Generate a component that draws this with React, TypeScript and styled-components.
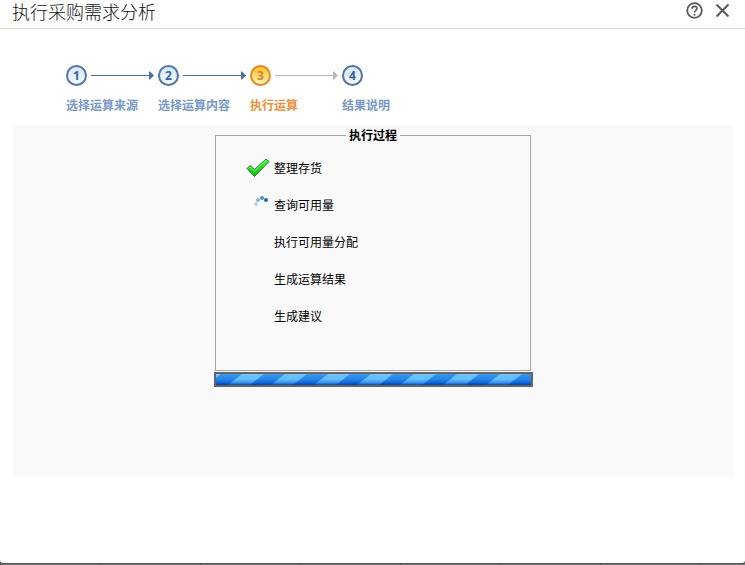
import React from "react";
import styled, { createGlobalStyle } from "styled-components";

const GlobalStyle = createGlobalStyle`
  * { box-sizing: border-box; }
  body {
    margin: 0;
    background: #6e6a6b;
    font-family: "Noto Sans CJK SC", sans-serif;
    font-size: 12px;
    line-height: 16px;
    color: #000;
  }
`;

const Page = styled.div`
  display: flex;
  flex-direction: column;
  min-height: 100vh;
  padding-bottom: 2px;
  background: repeating-linear-gradient(90deg, #4c494a 0 1px, #777374 1px 100px);
`;

const Dialog = styled.section`
  flex: 1;
  background: #fff;
  border-radius: 0 0 3px 3px;
  box-shadow: 0 1px 0 #575455;
`;

const Header = styled.header`
  display: flex;
  align-items: center;
  justify-content: space-between;
  height: 29px;
  padding: 0 14px 6px 12px;
  border-bottom: 1px solid #e0e0e0;
`;

const Title = styled.h1`
  margin: 0;
  font-size: 18px;
  line-height: 22px;
  font-weight: 300;
  color: #111;
`;

const Actions = styled.div`
  display: flex;
  gap: 11px;
  padding-bottom: 2px;
`;

const IconButton = styled.button`
  display: flex;
  padding: 0;
  border: 0;
  background: none;
  color: #5a5a5a;
  cursor: pointer;
`;

const Steps = styled.ol`
  display: flex;
  margin: 0;
  padding: 36px 0 12px 66px;
  list-style: none;
`;

type StepState = "done" | "current" | "next";

const Step = styled.li`
  width: 92px;
`;

const StepMark = styled.div`
  display: flex;
  align-items: center;
  gap: 4px;
  height: 21px;
`;

const Circle = styled.span<{ $state: StepState }>`
  display: flex;
  flex: none;
  align-items: center;
  justify-content: center;
  width: 21px;
  height: 21px;
  border: 2px solid ${(p) => (p.$state === "current" ? "#e38b27" : "#5473a8")};
  border-radius: 50%;
  background: ${(p) =>
    p.$state === "current"
      ? "linear-gradient(#ffc526, #ffefbd)"
      : "linear-gradient(#d5e9fc, #f3f9ff)"};
  color: ${(p) => (p.$state === "current" ? "#dc8428" : "#39639d")};
  font: bold 12px/16px "Noto Sans", sans-serif;
`;

const StepLabel = styled.div<{ $state: StepState }>`
  margin-top: 11px;
  font-weight: bold;
  white-space: nowrap;
  color: ${(p) => (p.$state === "current" ? "#e8913a" : "#7897c6")};
`;

const Panel = styled.main`
  display: flex;
  flex-direction: column;
  align-items: center;
  min-height: 352px;
  margin: 0 12px 0 13px;
  padding: 2px 0 90px;
  background: #f9f9f9;
`;

const Work = styled.div`
  display: flex;
  flex-direction: column;
  align-items: center;
  gap: 1px;
  width: 100%;
  max-width: 319px;
`;

const Process = styled.fieldset`
  width: calc(100% - 3px);
  margin: 0;
  padding: 6px 30px 36px;
  border: 1px solid #a5a5a5;
`;

const Legend = styled.legend`
  margin: 0 auto;
  padding: 0 3px;
  font-weight: bold;
`;

const Tasks = styled.ul`
  margin: 0;
  padding: 0;
  list-style: none;
`;

const Task = styled.li`
  display: flex;
  align-items: center;
  gap: 4px;
  height: 37px;
`;

const TaskIcon = styled.span`
  display: flex;
  width: 24px;
`;

const Progress = styled.div`
  width: 100%;
  height: 15px;
  border: 2px solid #626468;
  background: #2b86e4;
`;

const Stripes = styled.svg`
  display: block;
  width: 100%;
  height: 11px;
`;

const steps: { label: string; state: StepState }[] = [
  { label: "选择运算来源", state: "done" },
  { label: "选择运算内容", state: "done" },
  { label: "执行运算", state: "current" },
  { label: "结果说明", state: "next" },
];

const tasks = [
  { label: "整理存货", status: "done" },
  { label: "查询可用量", status: "running" },
  { label: "执行可用量分配", status: "waiting" },
  { label: "生成运算结果", status: "waiting" },
  { label: "生成建议", status: "waiting" },
];

const Arrow = ({ color }: { color: string }) => (
  <svg width="63" height="9" viewBox="0 0 63 9" aria-hidden="true">
    <path d="M0 4h60v1H0z" fill={color} />
    <path d="M58 0.500h1l4 4l-4 4h-1z" fill={color} />
  </svg>
);

const HelpIcon = () => (
  <svg width="17" height="17" viewBox="0 0 17 17" fill="none" stroke="currentColor" aria-hidden="true">
    <circle cx="8.5" cy="8.5" r="7.3" strokeWidth="1.8" />
    <path d="M6 6.8C6 3.5 11 3.6 11 6.6C11 8.4 8.5 8.3 8.5 10.6" strokeWidth="1.6" />
    <path d="M8.5 11.8v1.8" strokeWidth="1.8" />
  </svg>
);

const CloseIcon = () => (
  <svg width="17" height="17" viewBox="0 0 17 17" fill="none" stroke="currentColor" strokeWidth="2" aria-hidden="true">
    <path d="M2.5 2.5l12 12M14.5 2.5l-12 12" />
  </svg>
);

const CheckIcon = () => (
  <svg width="24" height="20" viewBox="0 0 24 20" role="img" aria-label="已完成">
    <defs>
      <linearGradient id="check" x1="0" y1="0" x2="0" y2="1">
        <stop offset="0" stopColor="#4df045" />
        <stop offset="1" stopColor="#08c00c" />
      </linearGradient>
    </defs>
    <path d="M1 10.500l3-3 4.500 4L20 1l3 2.500L8.500 18.500z" fill="url(#check)" stroke="#128a19" strokeLinejoin="round" />
    <path d="M2.500 10.500L4 9l4.500 4L20 2.500" fill="none" stroke="#a4f59d" strokeWidth="0.800" />
  </svg>
);

const SpinnerIcon = () => (
  <svg width="24" height="22" viewBox="0 0 24 22" role="img" aria-label="进行中">
    <circle cx="10" cy="10" r="2" fill="#b9d4e3" />
    <circle cx="12" cy="6" r="2" fill="#88b7d1" />
    <circle cx="16" cy="4" r="2" fill="#4d91ba" />
    <circle cx="20" cy="6" r="2" fill="#166a9f" />
  </svg>
);

export default function App() {
  return (
    <>
      <GlobalStyle />
      <Page>
        <Dialog role="dialog" aria-labelledby="dialog-title">
          <Header>
            <Title id="dialog-title">执行采购需求分析</Title>
            <Actions>
              <IconButton type="button" aria-label="帮助"><HelpIcon /></IconButton>
              <IconButton type="button" aria-label="关闭"><CloseIcon /></IconButton>
            </Actions>
          </Header>
          <Steps>
            {steps.map((step, i) => (
              <Step key={step.label} aria-current={step.state === "current" ? "step" : undefined}>
                <StepMark>
                  <Circle $state={step.state}>{i + 1}</Circle>
                  {i < steps.length - 1 && <Arrow color={step.state === "done" ? "#4d70a1" : "#b8b8b8"} />}
                </StepMark>
                <StepLabel $state={step.state}>{step.label}</StepLabel>
              </Step>
            ))}
          </Steps>
          <Panel>
            <Work>
              <Process>
                <Legend>执行过程</Legend>
                <Tasks>
                  {tasks.map((task) => (
                    <Task key={task.label}>
                      <TaskIcon>
                        {task.status === "done" && <CheckIcon />}
                        {task.status === "running" && <SpinnerIcon />}
                      </TaskIcon>
                      {task.label}
                    </Task>
                  ))}
                </Tasks>
              </Process>
              <Progress role="progressbar" aria-label="执行过程">
                <Stripes aria-hidden="true">
                  <defs>
                    <linearGradient id="base" x1="0" y1="0" x2="0" y2="1">
                      <stop offset="0" stopColor="#3b97e8" />
                      <stop offset="0.5" stopColor="#2585e6" />
                      <stop offset="0.8" stopColor="#0d62dd" />
                      <stop offset="1" stopColor="#073f9e" />
                    </linearGradient>
                    <linearGradient id="light" x1="0" y1="0" x2="0" y2="1">
                      <stop offset="0" stopColor="#70c3f8" />
                      <stop offset="0.5" stopColor="#65bcf8" />
                      <stop offset="0.8" stopColor="#338ff0" />
                      <stop offset="1" stopColor="#0847a6" />
                    </linearGradient>
                    <pattern id="stripes" x="12" width="43" height="11" patternUnits="userSpaceOnUse">
                      <rect width="43" height="11" fill="url(#base)" />
                      <path d="M14 0h22L22 11H0z" fill="url(#light)" />
                    </pattern>
                  </defs>
                  <rect width="100%" height="11" fill="url(#stripes)" />
                </Stripes>
              </Progress>
            </Work>
          </Panel>
        </Dialog>
      </Page>
    </>
  );
}
